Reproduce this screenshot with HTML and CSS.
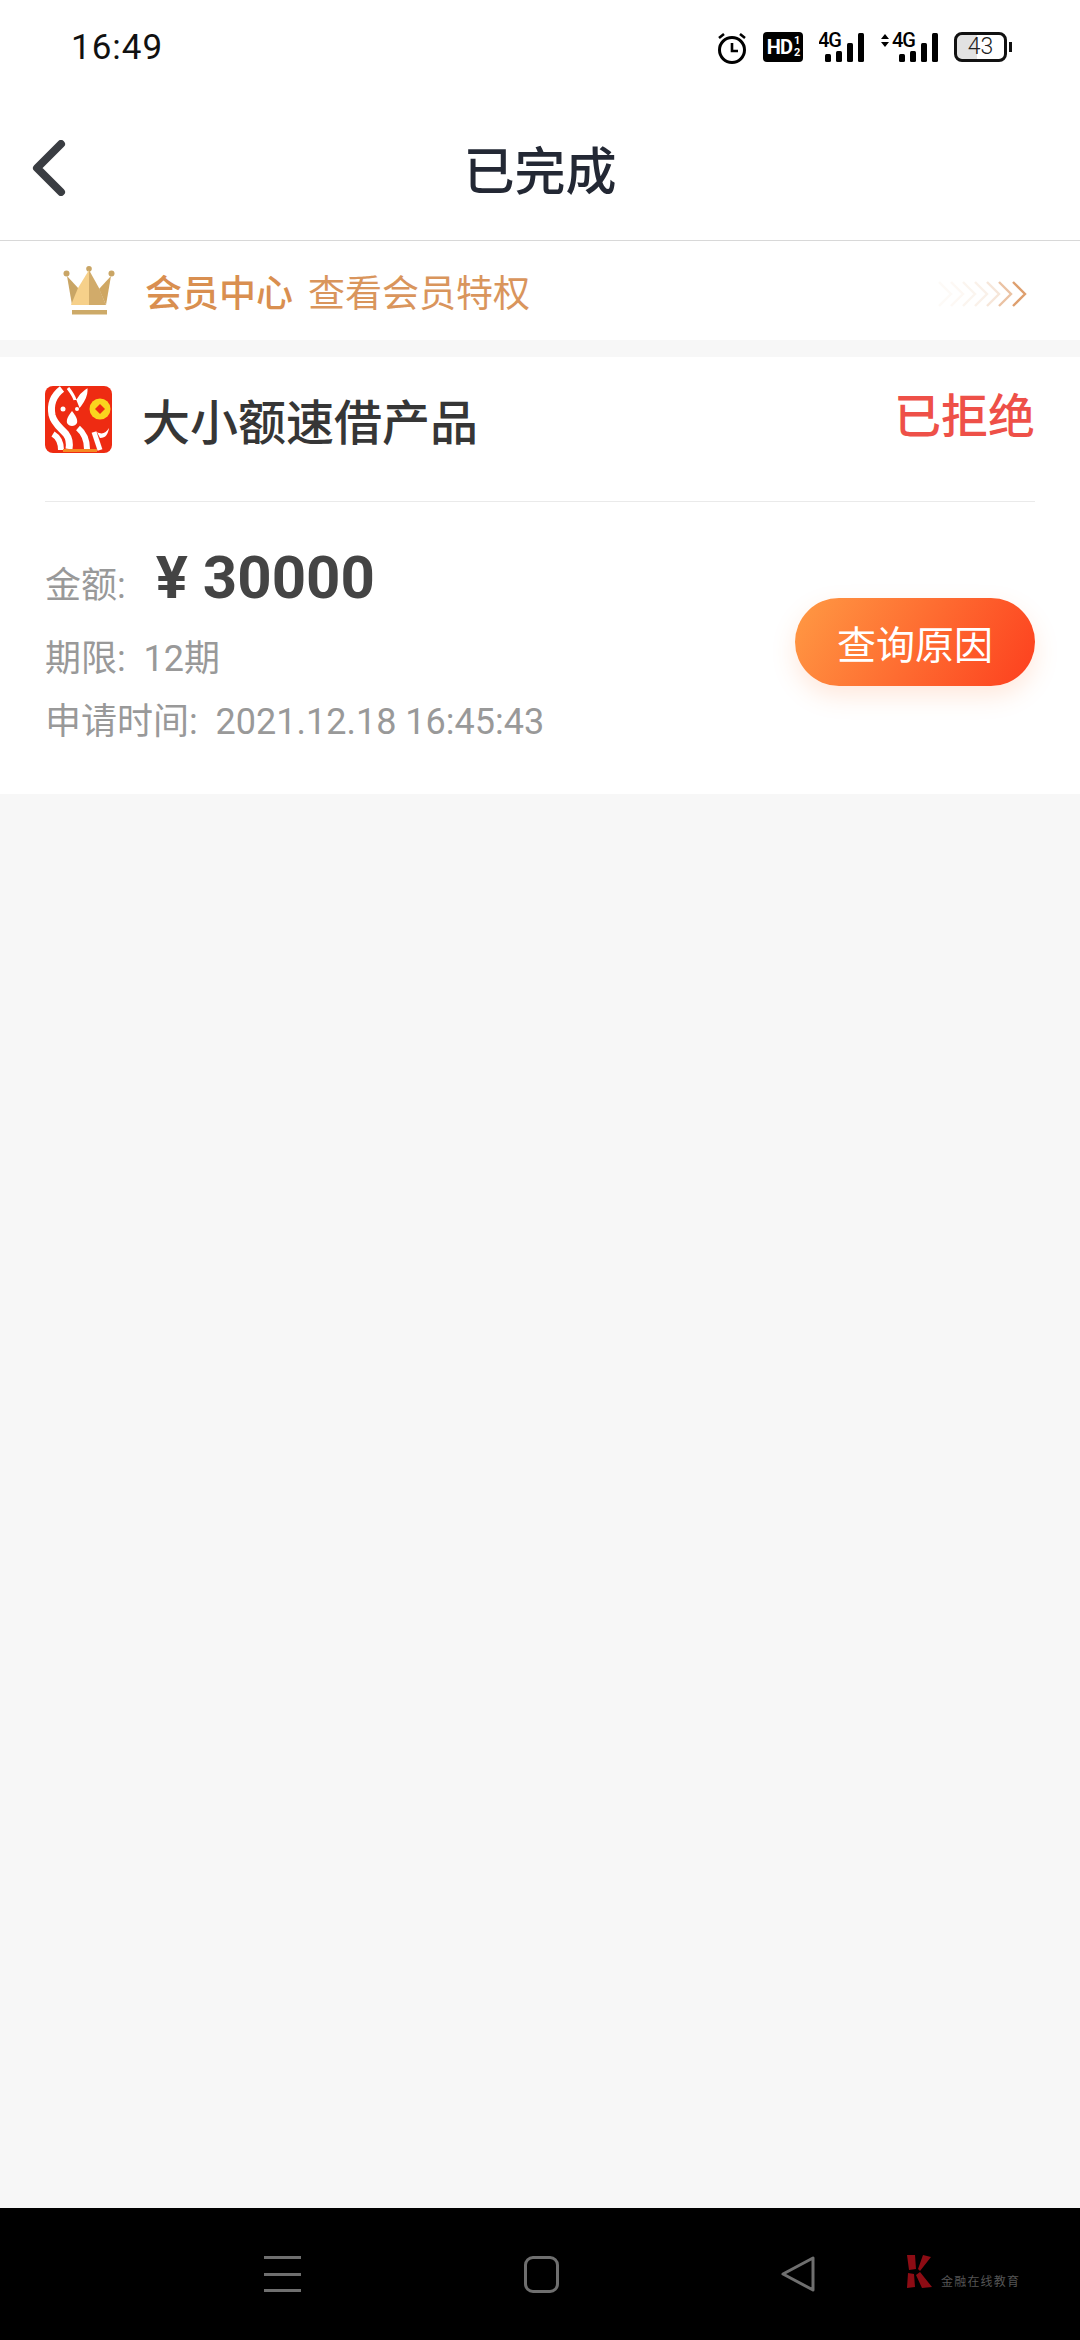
FILE: index.html
```html
<!DOCTYPE html>
<html lang="zh-CN">
<head>
    <meta charset="UTF-8">
    <meta name="viewport" content="width=device-width, initial-scale=1.0">
    <title>已完成</title>
    <link rel="stylesheet" href="styles.css">
</head>
<body>
    <div class="status-bar">
        <div class="status-time">16:49</div>
        <div class="status-icons">
            <svg class="icon-alarm" width="30" height="32" viewBox="0 0 30 32">
                <circle cx="15" cy="18" r="12.5" fill="none" stroke="#000" stroke-width="3"/>
                <path d="M15 11v8h6" fill="none" stroke="#000" stroke-width="2.6"/>
                <path d="M2 6l5-4M28 6l-5-4" fill="none" stroke="#000" stroke-width="2.6"/>
            </svg>
            <div class="hd-badge">HD<span class="hd-frac"><i>1</i><i>2</i></span></div>
            <svg class="icon-signal" width="45" height="36" viewBox="0 0 45 36">
                <text x="-1" y="20" class="signal-text">4G</text>
                <rect x="6" y="27" width="6" height="8" rx="1.5"/>
                <rect x="17" y="24" width="6" height="11" rx="1.5"/>
                <rect x="28" y="16" width="6" height="19" rx="1.5"/>
                <rect x="39" y="6" width="6" height="29" rx="1.5"/>
            </svg>
            <svg class="icon-signal" width="58" height="36" viewBox="0 0 58 36">
                <path d="M1 12l4-5 4 5zM1 15l4 5 4-5z"/>
                <text x="12" y="20" class="signal-text">4G</text>
                <rect x="19" y="27" width="6" height="8" rx="1.5"/>
                <rect x="30" y="24" width="6" height="11" rx="1.5"/>
                <rect x="41" y="16" width="6" height="19" rx="1.5"/>
                <rect x="52" y="6" width="6" height="29" rx="1.5"/>
            </svg>
            <div class="battery">
                <div class="battery-body">43</div>
                <div class="battery-nub"></div>
            </div>
        </div>
    </div>

    <div class="top-nav">
        <svg class="back-icon" width="34" height="56" viewBox="0 0 34 56">
            <path d="M29 4L5 28l24 24" fill="none" stroke="#3a3d42" stroke-width="8" stroke-linecap="round" stroke-linejoin="round"/>
        </svg>
        <div class="top-title">已完成</div>
        <div></div>
    </div>

    <div class="vip-banner">
        <svg class="crown" width="52" height="49" viewBox="0 0 52 49">
            <circle cx="3.500" cy="7.500" r="3" fill="#c9a565"/>
            <circle cx="26" cy="2.800" r="2.800" fill="#c9a565"/>
            <circle cx="48.500" cy="7.500" r="3" fill="#c9a565"/>
            <path d="M4 10l12 13-7 16z" fill="#c9a565"/>
            <path d="M48 10L36 23l7 16z" fill="#cfa763"/>
            <path d="M26 4L15 22 8 39h18z" fill="#f6d08a"/>
            <path d="M26 4l10 18 7 17H26z" fill="#d1ab6a"/>
            <rect x="9" y="44" width="35" height="4.500" fill="#cdaa68"/>
        </svg>
        <div class="vip-title">会员中心</div>
        <div class="vip-sub">查看会员特权</div>
        <svg class="chevrons" width="90" height="26" viewBox="0 0 90 26">
            <g fill="none" stroke="#dc9a66" stroke-width="2.400">
                <path d="M1 1l12 12L1 25" opacity=".05"/>
                <path d="M13 1l12 12-12 12" opacity=".07"/>
                <path d="M25 1l12 12-12 12" opacity=".1"/>
                <path d="M37 1l12 12-12 12" opacity=".14"/>
                <path d="M49 1l12 12-12 12" opacity=".25"/>
                <path d="M61 1l12 12-12 12" opacity=".6"/>
                <path d="M75 1l12 12-12 12" opacity=".95"/>
            </g>
        </svg>
    </div>

    <div class="main">
        <div class="card">
            <div class="card-head">
                <svg class="product-logo" width="67" height="67" viewBox="0 0 67 67">
                    <rect width="67" height="67" rx="8" fill="#ee2b12"/>
                    <path d="M17 3C9 9 5 18 7 29c2 9 9 13 14 19 3 4 4 9 3 15" fill="none" stroke="#fff" stroke-width="7"/>
                    <path d="M23 2c3 4 6 8 7 12M33 14c2-4 5-7 8-9 0 6-3 10-6 14z" fill="#fff" stroke="#fff" stroke-width="3"/>
                    <path d="M27 25c3 4 6 8 5 12-2 4-8 4-10 0-1-4 2-8 5-12z" fill="#fff"/>
                    <circle cx="18" cy="23" r="2.500" fill="#fff"/>
                    <circle cx="32" cy="23" r="2" fill="#fff"/>
                    <path d="M8 48c5 3 8 9 8 16M33 42c6 5 9 12 9 21" fill="none" stroke="#fff" stroke-width="6"/>
                    <path d="M49 46l6 18" fill="none" stroke="#fff" stroke-width="5"/>
                    <path d="M52 46c5 3 9 1 12-4-1 6-3 10-9 10" fill="#fff"/>
                    <circle cx="55" cy="23" r="10.500" fill="#fad51e"/>
                    <path d="M55 18l5 5-5 5-5-5z" fill="#ee2b12"/>
                    <rect x="18" y="63" width="34" height="3" fill="#f58a22"/>
                </svg>
                <div class="product-name">大小额速借产品</div>
                <div class="product-state">已拒绝</div>
            </div>
            <div class="card-body">
                <div class="info">
                    <div class="info-amount">
                        <span class="info-label">金额:</span>
                        <span class="amount-value">¥ 30000</span>
                    </div>
                    <div class="info-row">期限:&nbsp; 12期</div>
                    <div class="info-row">申请时间:&nbsp; 2021.12.18 16:45:43</div>
                </div>
                <button class="reason-btn">查询原因</button>
            </div>
        </div>
    </div>

    <div class="bottom-nav">
        <div class="nav-menu"><span></span><span></span><span></span></div>
        <div class="nav-home"></div>
        <svg class="nav-back" width="36" height="38" viewBox="0 0 36 38">
            <path d="M33 3v32L3 19z" fill="none" stroke="#6f6f6f" stroke-width="3" stroke-linejoin="round"/>
        </svg>
        <div class="watermark">
            <svg width="28" height="34" viewBox="0 0 28 34">
                <path d="M2 0h8l1 14-7 1zM18 0l8 2-11 14-2-2zM3 18l6 1 1 13-8 1zM15 17l12 15-10 1-6-13z" fill="#8d0c14"/>
            </svg>
            <span class="watermark-text">金融在线教育</span>
        </div>
    </div>
</body>
</html>
```

FILE: styles.css
```css
* {
    box-sizing: border-box;
}
body {
    font-family: Roboto, "Noto Sans CJK SC", sans-serif;
    display: flex;
    flex-direction: column;
    width: 1080px;
    height: 2340px;
    margin: 0;
    background-color: #f7f7f7;
    overflow: hidden;
}

/* status bar */
.status-bar {
    display: flex;
    justify-content: space-between;
    height: 96px;
    padding: 32px 68px 0 71px;
    background-color: #fff;
}
.status-time {
    font-size: 35px;
    line-height: 32px;
    letter-spacing: 1px;
    color: #111;
}
.status-icons {
    display: flex;
    align-items: flex-start;
    gap: 16px;
}
.icon-signal {
    margin-top: -5px;
}
.hd-badge {
    display: flex;
    align-items: center;
    justify-content: center;
    width: 40px;
    height: 30px;
    border-radius: 4px;
    background-color: #000;
    color: #fff;
    font-size: 20px;
    font-weight: 700;
    letter-spacing: -1px;
}
.hd-frac {
    display: flex;
    flex-direction: column;
    margin-left: 2px;
    font-size: 11px;
    line-height: 12px;
}
.hd-frac i {
    font-style: normal;
}
.signal-text {
    font-family: Roboto, sans-serif;
    font-size: 20px;
    font-weight: 500;
    letter-spacing: -1px;
}
.battery {
    display: flex;
    align-items: center;
    height: 30px;
}
.battery-body {
    width: 53px;
    height: 30px;
    border: 3px solid #111;
    border-radius: 8px;
    background: linear-gradient(90deg, #e2e2e2 43%, #fff 43%);
    color: #222;
    font-size: 23px;
    font-weight: 300;
    line-height: 24px;
    text-align: center;
}
.battery-nub {
    width: 3px;
    height: 10px;
    margin-left: 2px;
    background-color: #111;
}

/* header */
.top-nav {
    display: grid;
    grid-template-columns: 1fr auto 1fr;
    align-items: center;
    height: 145px;
    padding: 0 32px 0 32px;
    border-bottom: 1px solid #d8d8d8;
    background-color: #fff;
}
.top-title {
    font-size: 51px;
    font-weight: 500;
    color: #232834;
}
.vip-banner {
    display: flex;
    align-items: center;
    height: 99px;
    padding: 0 52px 0 63px;
    background-color: #fff;
}
.vip-title {
    margin-left: 30px;
    font-size: 37px;
    font-weight: 500;
    color: #d98f50;
}
.vip-sub {
    margin-left: 15px;
    font-size: 37px;
    color: #d9955c;
}
.chevrons {
    margin-left: auto;
    margin-top: 6px;
}

/* order card */
.main {
    flex: 1;
    padding-top: 17px;
}
.card {
    padding: 0 45px;
    background-color: #fff;
}
.card-head {
    display: flex;
    align-items: center;
    height: 145px;
    padding-bottom: 20px;
    border-bottom: 1px solid #eaeaea;
}
.product-name {
    margin-left: 30px;
    font-size: 48px;
    font-weight: 500;
    color: #363636;
}
.product-state {
    margin-left: auto;
    margin-top: -13px;
    font-size: 47px;
    font-weight: 500;
    color: #ee5048;
}
.card-body {
    display: flex;
    justify-content: space-between;
    align-items: flex-start;
    height: 292px;
    padding-top: 35px;
}
.info-amount {
    display: flex;
    align-items: center;
    height: 80px;
    margin-bottom: 15px;
}
.info-label {
    margin-top: 10px;
    font-size: 36px;
    color: #999;
}
.amount-value {
    margin-left: 30px;
    font-size: 60px;
    font-weight: 700;
    color: #444;
}
.info-row {
    margin-top: 8px;
    font-size: 36px;
    line-height: 55px;
    color: #999;
}
.reason-btn {
    width: 240px;
    height: 88px;
    margin-top: 61px;
    border: none;
    border-radius: 44px;
    background: linear-gradient(120deg, #ff9a44, #fd3f1e);
    box-shadow: 0 10px 24px rgba(255, 130, 60, 0.18);
    color: #fff;
    font-family: inherit;
    font-size: 39px;
}

/* system nav */
.bottom-nav {
    display: flex;
    align-items: center;
    height: 132px;
    padding-left: 264px;
    background-color: #000;
}
.nav-menu {
    display: flex;
    flex-direction: column;
    justify-content: space-between;
    width: 37px;
    height: 36px;
}
.nav-menu span {
    height: 3px;
    background-color: #6f6f6f;
}
.nav-home {
    width: 35px;
    height: 37px;
    margin-left: 223px;
    border: 3px solid #6f6f6f;
    border-radius: 9px;
}
.nav-back {
    margin-left: 221px;
}
.watermark {
    display: flex;
    align-items: flex-end;
    margin-left: 89px;
    margin-bottom: 4px;
}
.watermark-text {
    margin-left: 8px;
    font-size: 12px;
    letter-spacing: 1.200px;
    color: #555;
}
```
